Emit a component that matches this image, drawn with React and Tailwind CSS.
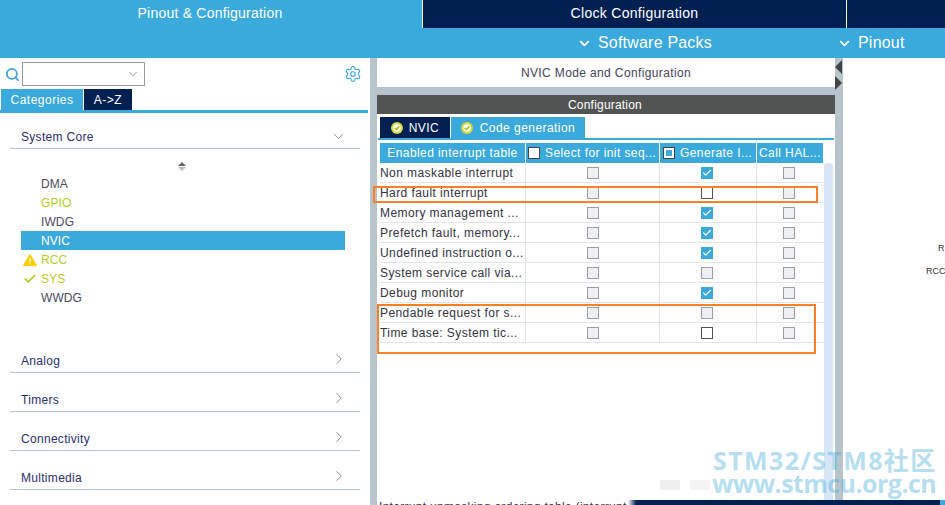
import React from 'react';
import { ChevronDown, ChevronRight, Search, Settings, Check } from 'lucide-react';

const rows = [
  { name: 'Non maskable interrupt', gen: 'checked' },
  { name: 'Hard fault interrupt', gen: 'open' },
  { name: 'Memory management ...', gen: 'checked' },
  { name: 'Prefetch fault, memory...', gen: 'checked' },
  { name: 'Undefined instruction o...', gen: 'checked' },
  { name: 'System service call via...', gen: 'grey' },
  { name: 'Debug monitor', gen: 'checked' },
  { name: 'Pendable request for s...', gen: 'grey' },
  { name: 'Time base: System tic...', gen: 'open' },
];

const items = [
  { name: 'DMA' },
  { name: 'GPIO', color: 'text-[#b5cf1e]' },
  { name: 'IWDG' },
  { name: 'NVIC', active: true },
  { name: 'RCC', color: 'text-[#b5cf1e]', icon: 'warn' },
  { name: 'SYS', color: 'text-[#b5cf1e]', icon: 'check' },
  { name: 'WWDG' },
];

function Box({ kind }) {
  if (kind === 'checked') {
    return (
      <span className="flex h-3 w-3 items-center justify-center bg-[#3aa9dc]">
        <Check size={10} strokeWidth={3} className="text-white" />
      </span>
    );
  }
  if (kind === 'open') return <span className="h-3 w-3 border border-[#555555] bg-white" />;
  return <span className="h-3 w-3 border border-[#9a9fa3] bg-[#eef0f3]" />;
}

function Badge() {
  return (
    <svg width="12" height="12" viewBox="0 0 12 12" className="shrink-0">
      <circle cx="6" cy="6" r="6" fill="#d3d93c" />
      <circle cx="6" cy="6" r="3.8" fill="#ffffff" />
      <path d="M3.8 6 L5.4 7.6 L8.3 4.4" fill="none" stroke="#b0bf1e" strokeWidth="1.6" />
    </svg>
  );
}

function Category({ name }) {
  return (
    <div className="mx-[10px] mb-[15px] flex h-[24px] items-center justify-between border-b border-[#b8c4cc] pl-[11px] pr-[12px] text-[12px] tracking-[0.3px] text-[#2a2f6b]">
      <span>{name}</span>
      <ChevronRight size={18} strokeWidth={1} className="mb-1 text-[#666666]" />
    </div>
  );
}

function Sidebar() {
  return (
    <div className="flex w-[370px] shrink-0 flex-col overflow-hidden bg-white">
      <div className="flex h-[31px] items-center pl-[5px] pr-[7px] pt-[1px]">
        <Search size={15} strokeWidth={3} className="text-[#3aa9dc]" />
        <div className="ml-[2px] flex h-[24px] w-[123px] items-center justify-end border border-[#9a9a9a] pr-[4px]">
          <ChevronDown size={14} strokeWidth={1} className="text-[#555555]" />
        </div>
        <Settings size={18} strokeWidth={1.5} className="ml-auto mr-[1px] text-[#3aa9dc]" />
      </div>
      <div className="flex h-[21px] pl-[1px] text-[12px] tracking-[0.5px] text-white">
        <div className="flex w-[82px] items-center justify-center bg-[#3aa9dc]">Categories</div>
        <div className="ml-[1px] flex w-[48px] items-center justify-center bg-[#002052]">{'A->Z'}</div>
      </div>
      <div className="mr-[2px] h-[3px] bg-[#3aa9dc]" />
      <div className="mx-[10px] mt-[12px] flex h-[24px] items-center justify-between border-b border-[#b8c4cc] pl-[11px] pr-[13px] text-[12px] tracking-[0.3px] text-[#2a2f6b]">
        <span>System Core</span>
        <ChevronDown size={17} strokeWidth={1} className="text-[#666666]" />
      </div>
      <div className="flex h-[26px] flex-col items-center justify-center gap-[1px] pr-[6px] pt-[8px]">
        <span className="h-0 w-0 border-x-[4px] border-b-[4px] border-x-transparent border-b-[#666666]" />
        <span className="h-0 w-0 border-x-[4px] border-t-[4px] border-x-transparent border-t-[#bbbbbb]" />
      </div>
      <div className="ml-[21px] mt-[-1px] mb-[42px] w-[324px] text-[12px] tracking-[0.1px]">
        {items.map((item) => (
          <div
            key={item.name}
            className={`flex h-[19px] items-center ${item.active ? 'bg-[#3aa9dc] text-white' : item.color || 'text-[#4a4a5e]'}`}
          >
            <span className="flex w-[20px] items-center pl-[2px]">
              {item.icon === 'warn' && (
                <svg width="14" height="12" viewBox="0 0 14 12">
                  <path d="M7 0.5 L13.5 11.5 L0.5 11.5 Z" fill="#ffcc00" stroke="#ffcc00" strokeLinejoin="round" />
                  <rect x="6.4" y="4" width="1.2" height="4.5" fill="#ffffff" />
                  <rect x="6.4" y="9.2" width="1.2" height="1.3" fill="#ffffff" />
                </svg>
              )}
              {item.icon === 'check' && <Check size={14} strokeWidth={3} className="text-[#b5cf1e]" />}
            </span>
            {item.name}
          </div>
        ))}
      </div>
      <Category name="Analog" />
      <Category name="Timers" />
      <Category name="Connectivity" />
      <Category name="Multimedia" />
    </div>
  );
}

function InterruptTable() {
  return (
    <div className="flex min-h-0 flex-1">
      <div className="ml-[3px] w-[444px] pt-[3px]">
        <div className="grid grid-cols-[145px_134px_97px_67px] text-[12px] tracking-[0.42px]">
          <div className="flex h-[20px] items-center justify-center bg-[#3aa9dc] text-white">Enabled interrupt table</div>
          <div className="flex h-[20px] items-center gap-[5px] border-l border-white bg-[#3aa9dc] pl-[2px] text-white">
            <span className="h-3 w-3 border border-[#444444] bg-white" />Select for init seq...
          </div>
          <div className="flex h-[20px] items-center gap-[5px] border-l border-white bg-[#3aa9dc] pl-[3px] text-white">
            <span className="flex h-3 w-3 items-center justify-center border border-[#444444] bg-white">
              <span className="h-[6px] w-[6px] bg-[#3aa9dc]" />
            </span>Generate I...
          </div>
          <div className="flex h-[20px] items-center border-l border-white bg-[#3aa9dc] pl-[2px] text-white">Call HAL...</div>
          {rows.map((row) => (
            <React.Fragment key={row.name}>
              <div className="flex h-[20px] items-center overflow-hidden whitespace-nowrap border-b border-[#e2e4e6] text-[#333340]">{row.name}</div>
              <div className="flex h-[20px] items-center justify-center border-b border-l border-[#e2e4e6]"><Box kind="grey" /></div>
              <div className="flex h-[20px] items-center justify-center border-b border-l border-[#e2e4e6] pr-[2px]"><Box kind={row.gen} /></div>
              <div className="flex h-[20px] items-center justify-center border-b border-l border-[#e2e4e6] pr-[2px]"><Box kind="grey" /></div>
            </React.Fragment>
          ))}
        </div>
      </div>
      <div className="mt-[23px] w-[9px] rounded-t-[4px] bg-[#d7e6f4]" />
    </div>
  );
}

export default function App() {
  return (
    <div className="relative h-[505px] w-[945px] overflow-hidden bg-white font-['Liberation_Sans','Noto_Sans_CJK_SC',sans-serif]">
      {/* Top tabs */}
      <div className="flex h-[28px] text-[14px] tracking-[0.22px] text-white">
        <div className="flex w-[422px] items-center justify-center bg-[#3aa9dc] pb-[2px] pr-[2px]">Pinout &amp; Configuration</div>
        <div className="flex w-[425px] items-center justify-center border-x border-white bg-[#002052] pb-[2px] tracking-[0.3px]">Clock Configuration</div>
        <div className="flex-1 bg-[#002052]" />
      </div>
      <div className="flex h-[30px] items-center bg-[#3aa9dc] text-[16px] tracking-[0.2px] text-white">
        <div className="ml-[577px] flex w-[259px] items-center gap-[6px]">
          <ChevronDown size={15} strokeWidth={3} />Software Packs
        </div>
        <div className="ml-[1px] flex items-center gap-[6px]">
          <ChevronDown size={15} strokeWidth={3} />Pinout
        </div>
      </div>

      <div className="flex h-[447px]">
        <Sidebar />
        <div className="w-[7px] shrink-0 bg-[#b8c4cc]" />

        {/* Middle panel */}
        <div className="flex w-[458px] shrink-0 flex-col bg-white">
          <div className="flex h-[29px] shrink-0 items-center justify-center text-[12px] tracking-[0.37px] text-[#44445a]">
            NVIC Mode and Configuration
          </div>
          <div className="h-[8px] shrink-0 bg-[#b8c4cc]" />
          <div className="flex h-[19px] shrink-0 items-center justify-center bg-[#525453] pr-[2px] text-[12px] tracking-[0.2px] text-white">Configuration</div>
          <div className="ml-[3px] mt-[3px] flex h-[21px] shrink-0 text-[12px] tracking-[0.45px] text-white">
            <div className="flex w-[70px] items-center justify-center gap-[6px] bg-[#002052]"><Badge />NVIC</div>
            <div className="ml-px flex w-[134px] items-center justify-center gap-[7px] bg-[#3aa9dc]"><Badge />Code generation</div>
          </div>
          <div className="mx-[1px] h-[2px] shrink-0 bg-[#3aa9dc]" />
          <InterruptTable />
          <div className="flex h-[5px] shrink-0 overflow-hidden">
            <div className="ml-[2px] w-[249px] whitespace-nowrap text-[12px] leading-[14px] tracking-[0.3px] text-[#333340]">
              Interrupt unmasking ordering table (interrupt ...
            </div>
            <div className="flex-1 bg-gradient-to-r from-[#ffffff] to-[#002052] to-[4%]" />
          </div>
        </div>

        <div className="flex w-[8px] shrink-0 flex-col bg-[#b8c4cc] pt-[2px]">
          <span className="h-0 w-0 border-y-[7px] border-r-[7px] border-y-transparent border-r-[#444444]" />
          <span className="mt-[2px] h-0 w-0 border-y-[7px] border-l-[7px] border-y-transparent border-l-[#444444]" />
          <div className="mt-auto h-[5px] bg-[#002052]" />
        </div>

        {/* Pinout view, cut off at the window edge */}
        <div className="relative flex-1 overflow-hidden bg-white">
          <span className="absolute left-[95px] top-[184px] text-[9px] text-[#333333]">R</span>
          <span className="absolute left-[83px] top-[207px] whitespace-nowrap text-[9px] text-[#333333]">RCC</span>
          <div className="absolute bottom-0 left-0 h-[5px] w-[97px] bg-[#002052]" />
          <div className="absolute bottom-0 right-0 h-[5px] w-[5px] bg-[#3aa9dc]" />
        </div>
      </div>

      {/* Hand-drawn highlight boxes on the screenshot */}
      <div className="absolute left-[373px] top-[186px] h-[17px] w-[445px] border-2 border-[#ff7f27]" />
      <div className="absolute left-[377px] top-[304px] h-[50px] w-[439px] border-2 border-[#ff7f27]" />

      {/* Ghost boxes left behind the watermark */}
      <div className="absolute left-[660px] top-[480px] h-[10px] w-[20px] bg-[#efefef]" />
      <div className="absolute left-[690px] top-[480px] h-[10px] w-[20px] bg-[#f4f4f4]" />

      {/* Watermark */}
      <div className="absolute left-[713px] top-[445px] whitespace-nowrap font-['Open_Sans','Noto_Sans_CJK_SC',sans-serif] text-[25px] font-bold leading-[30px] tracking-[1.4px] text-[#3aa9dc]/40">
        STM32/STM8社区
      </div>
      <div className="absolute left-[712px] top-[468px] whitespace-nowrap font-['Open_Sans',sans-serif] text-[25px] font-bold leading-[30px] tracking-[-0.55px] text-[#3aa9dc]/40">
        www.stmcu.org.cn
      </div>
    </div>
  );
}
